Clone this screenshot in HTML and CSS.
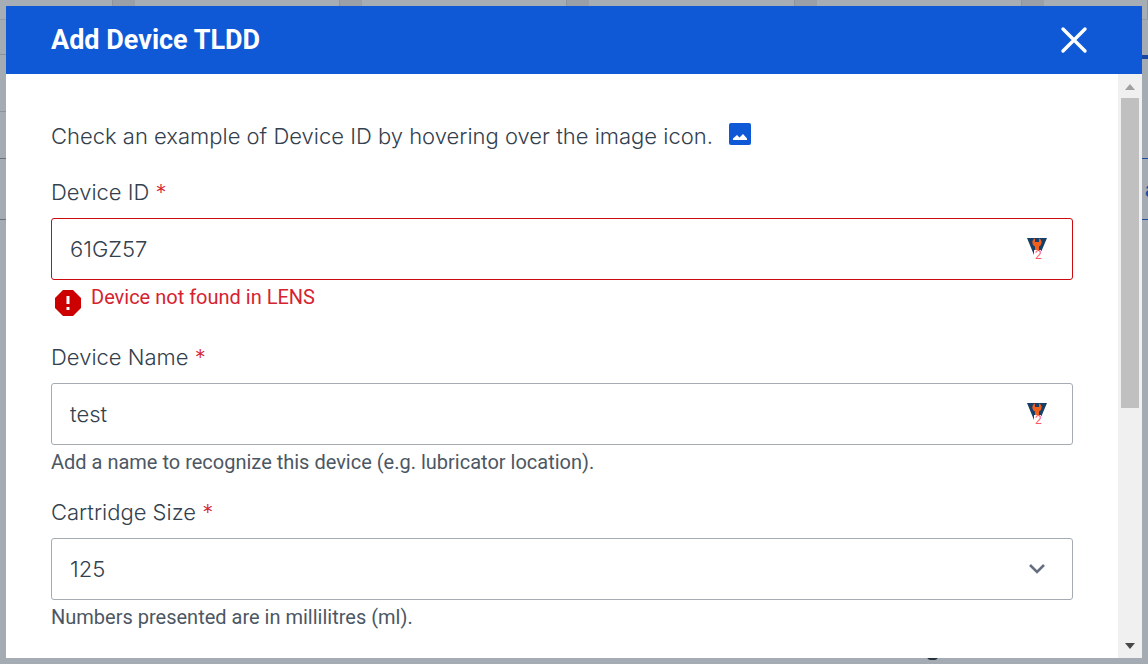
FILE: index.html
```html
<!DOCTYPE html>
<html lang="en">
<head>
<meta charset="utf-8">
<title>Add Device TLDD</title>
<meta name="viewport" content="width=device-width, initial-scale=1">
<link rel="stylesheet" href="styles.css">
</head>
<body>
<div class="page" aria-hidden="true">
  <div class="page-cards">
    <span class="page-card page-card-first"></span>
    <span class="page-card"></span>
    <span class="page-card"></span>
    <span class="page-card"></span>
    <span class="page-card"></span>
    <span class="page-card page-card-last"></span>
  </div>
  <div class="page-rails">
    <div class="rail">
      <span class="rail-row rail-tab"></span>
      <span class="rail-row rail-head"></span>
      <span class="rail-row rail-strong"></span>
      <span class="rail-row rail-entry"></span>
    </div>
    <div class="rail">
      <span class="rail-row rail-active"></span>
      <span class="rail-row rail-blank"></span>
      <span class="rail-row rail-action">a</span>
    </div>
  </div>
  <span class="page-mark"></span>
</div>

<div class="modal" role="dialog" aria-modal="true" aria-labelledby="modal-title">
  <header class="modal-header">
    <h1 class="modal-title" id="modal-title">Add Device TLDD</h1>
    <button class="modal-close" type="button" aria-label="Close">
      <svg width="28" height="28" viewBox="0 0 28 28"><path d="M3 3 25 25M25 3 3 25" stroke="currentColor" stroke-width="3.4" stroke-linecap="round"/></svg>
    </button>
  </header>
  <div class="modal-main">
    <form class="form">
      <p class="intro">
        <span>Check an example of Device ID by hovering over the image icon.</span>
        <svg class="intro-icon" width="22" height="22" viewBox="0 0 22 22"><rect width="22" height="22" rx="2" fill="#0f59d7"/><path d="M4 17v-1.500L8 12l2.500 2.500L14 11l4 4.500V17z" fill="#fff"/></svg>
      </p>

      <div class="field">
        <label class="label" for="device-id">Device ID <span class="required">*</span></label>
        <div class="control control-invalid">
          <input class="input" id="device-id" type="text" value="61GZ57" aria-describedby="device-id-error" aria-invalid="true">
          <svg class="badge" width="22" height="28" viewBox="0 0 22 28" aria-hidden="true"><path d="M1 3h20l-5.500 13H8v4z" fill="#173f68"/><path d="M9 3.500C5.500 4.500 5.500 10 9 11.500V15h4v-3.500c3.500-1.500 3.500-7 0-8V7h-4z" fill="#f0601c"/><path d="M8 15h7v6H9z" fill="#fff"/><text class="badge-count" x="9" y="24">2</text></svg>
        </div>
        <p class="support support-error" id="device-id-error">
          <svg class="error-icon" width="26" height="26" viewBox="0 0 26 26" aria-hidden="true"><path d="M8 0h10l8 8v10l-8 8H8l-8-8V8z" fill="#c00"/><path d="M11.500 6h3v8h-3zM11.500 17h3v3h-3z" fill="#fff"/></svg>
          <span>Device not found in LENS</span>
        </p>
      </div>

      <div class="field">
        <label class="label" for="device-name">Device Name <span class="required">*</span></label>
        <div class="control">
          <input class="input" id="device-name" type="text" value="test" aria-describedby="device-name-help">
          <svg class="badge" width="22" height="28" viewBox="0 0 22 28" aria-hidden="true"><path d="M1 3h20l-5.500 13H8v4z" fill="#173f68"/><path d="M9 3.500C5.500 4.500 5.500 10 9 11.500V15h4v-3.500c3.500-1.500 3.500-7 0-8V7h-4z" fill="#f0601c"/><path d="M8 15h7v6H9z" fill="#fff"/><text class="badge-count" x="9" y="24">2</text></svg>
        </div>
        <p class="support" id="device-name-help">Add a name to recognize this device (e.g. lubricator location).</p>
      </div>

      <div class="field">
        <label class="label" for="cartridge-size">Cartridge Size <span class="required">*</span></label>
        <div class="control">
          <select class="input select" id="cartridge-size" aria-describedby="cartridge-size-help">
            <option>125</option>
          </select>
          <svg class="chevron" width="22" height="24" viewBox="0 0 22 24" aria-hidden="true"><path d="M4 8l7 7 7-7" fill="none" stroke="#656f80" stroke-width="2.600"/></svg>
        </div>
        <p class="support" id="cartridge-size-help">Numbers presented are in millilitres (ml).</p>
      </div>
    </form>
    <div class="scrollbar" aria-hidden="true">
      <svg width="24" height="24" viewBox="0 0 24 24"><path d="M7 16h10l-5-6z" fill="#a0a0a0"/></svg>
      <span class="scrollbar-thumb"></span>
      <span class="scrollbar-rest"></span>
      <svg width="24" height="24" viewBox="0 0 24 24"><path d="M7 9h10l-5 6z" fill="#484848"/></svg>
    </div>
  </div>
</div>
</body>
</html>
```
FILE: styles.css
```css
* {
  box-sizing: border-box;
}

body {
  margin: 0;
  height: 100vh;
  overflow: hidden;
  background: #a5abb2;
  color: #33404d;
  font-family: Inter, Roboto, sans-serif;
  font-size: 22px;
  font-weight: 300;
  line-height: 32px;
}

p {
  margin: 0;
}

.page {
  display: flex;
  flex-direction: column;
  height: 100%;
}

.page-cards {
  display: flex;
  gap: 22px;
  height: 20px;
  background: #9ba0a8;
  border-bottom: 1px solid #969ca4;
}

.page-card {
  flex: 205;
  background: #a7adb4;
  border-right: 1px solid #8f959d;
}

.page-card-first {
  flex: 113;
}

.page-card-last {
  flex: 104;
}

.page-rails {
  display: flex;
  flex: 1;
  justify-content: space-between;
}

.rail {
  display: flex;
  flex-direction: column;
  width: 6px;
}

.rail-row {
  border-bottom: 1px solid #8d939b;
}

.rail-tab {
  height: 35px;
}

.rail-head {
  height: 57px;
}

.rail-strong {
  height: 47px;
  border-color: #69727d;
}

.rail-entry {
  height: 61px;
  border-color: #69727d;
}

.rail-active {
  height: 39px;
  border-bottom: 4px solid #17479e;
}

.rail-blank {
  height: 100px;
  border-color: #1c4da5;
}

.rail-action {
  height: 61px;
  padding-left: 3px;
  border-color: #1c4da5;
  color: #1c4da5;
  font-weight: 700;
  line-height: 60px;
}

.page-mark {
  align-self: flex-end;
  width: 11px;
  height: 6px;
  margin-right: 210px;
  border-bottom: 2px solid #26313c;
  border-radius: 0 0 4px 4px;
  margin-bottom: 4px;
}

.modal {
  position: fixed;
  inset: 6px;
  display: flex;
  flex-direction: column;
  background: #fff;
}

.modal-header {
  display: flex;
  align-items: center;
  justify-content: space-between;
  height: 68px;
  padding: 0 54px 0 45px;
  background: #0f59d7;
  color: #fff;
}

.modal-title {
  margin: 0;
  font-family: Roboto, sans-serif;
  font-size: 27px;
  font-weight: 700;
}

.modal-close {
  display: flex;
  padding: 0;
  border: 0;
  background: none;
  color: inherit;
}

.modal-main {
  display: flex;
  flex: 1;
  min-height: 0;
}

.form {
  display: flex;
  flex: 1;
  flex-direction: column;
  gap: 21px;
  padding: 46px 45px 20px;
  overflow: hidden;
}

.intro {
  display: flex;
  gap: 16px;
  margin-bottom: 3px;
}

.intro-icon {
  margin-top: 3px;
}

.field {
  display: flex;
  flex-direction: column;
}

.label {
  margin-bottom: 10px;
}

.required {
  color: #d5232f;
}

.control {
  display: grid;
  align-items: center;
  height: 62px;
  border: 1px solid #a4abb3;
  border-radius: 3px;
}

.control-invalid {
  border-color: #cc0a10;
}

.input {
  grid-area: 1 / 1;
  width: 100%;
  height: 100%;
  padding: 0 60px 0 18px;
  border: 0;
  outline: 0;
  background: none;
  color: inherit;
  font: inherit;
}

.select {
  appearance: none;
}

.badge,
.chevron {
  grid-area: 1 / 1;
  justify-self: end;
  margin-right: 24px;
  pointer-events: none;
}

.badge-count {
  fill: #ff5a5f;
  font-family: Roboto, sans-serif;
  font-size: 12px;
  font-weight: 400;
}

.support {
  margin-top: 4px;
  color: #4c5763;
  font-family: Roboto, sans-serif;
  font-size: 20px;
  font-weight: 400;
  line-height: 26px;
}

.support-error {
  display: flex;
  gap: 10px;
  min-height: 36px;
  padding-left: 4px;
  color: #d5232f;
}

.error-icon {
  margin-top: 6px;
}

.scrollbar {
  display: flex;
  flex-direction: column;
  width: 24px;
  background: #f0f0f0;
}

.scrollbar-thumb {
  flex: 310;
  margin: 0 3px;
  background: #c0c0c0;
}

.scrollbar-rest {
  flex: 226;
}
```
